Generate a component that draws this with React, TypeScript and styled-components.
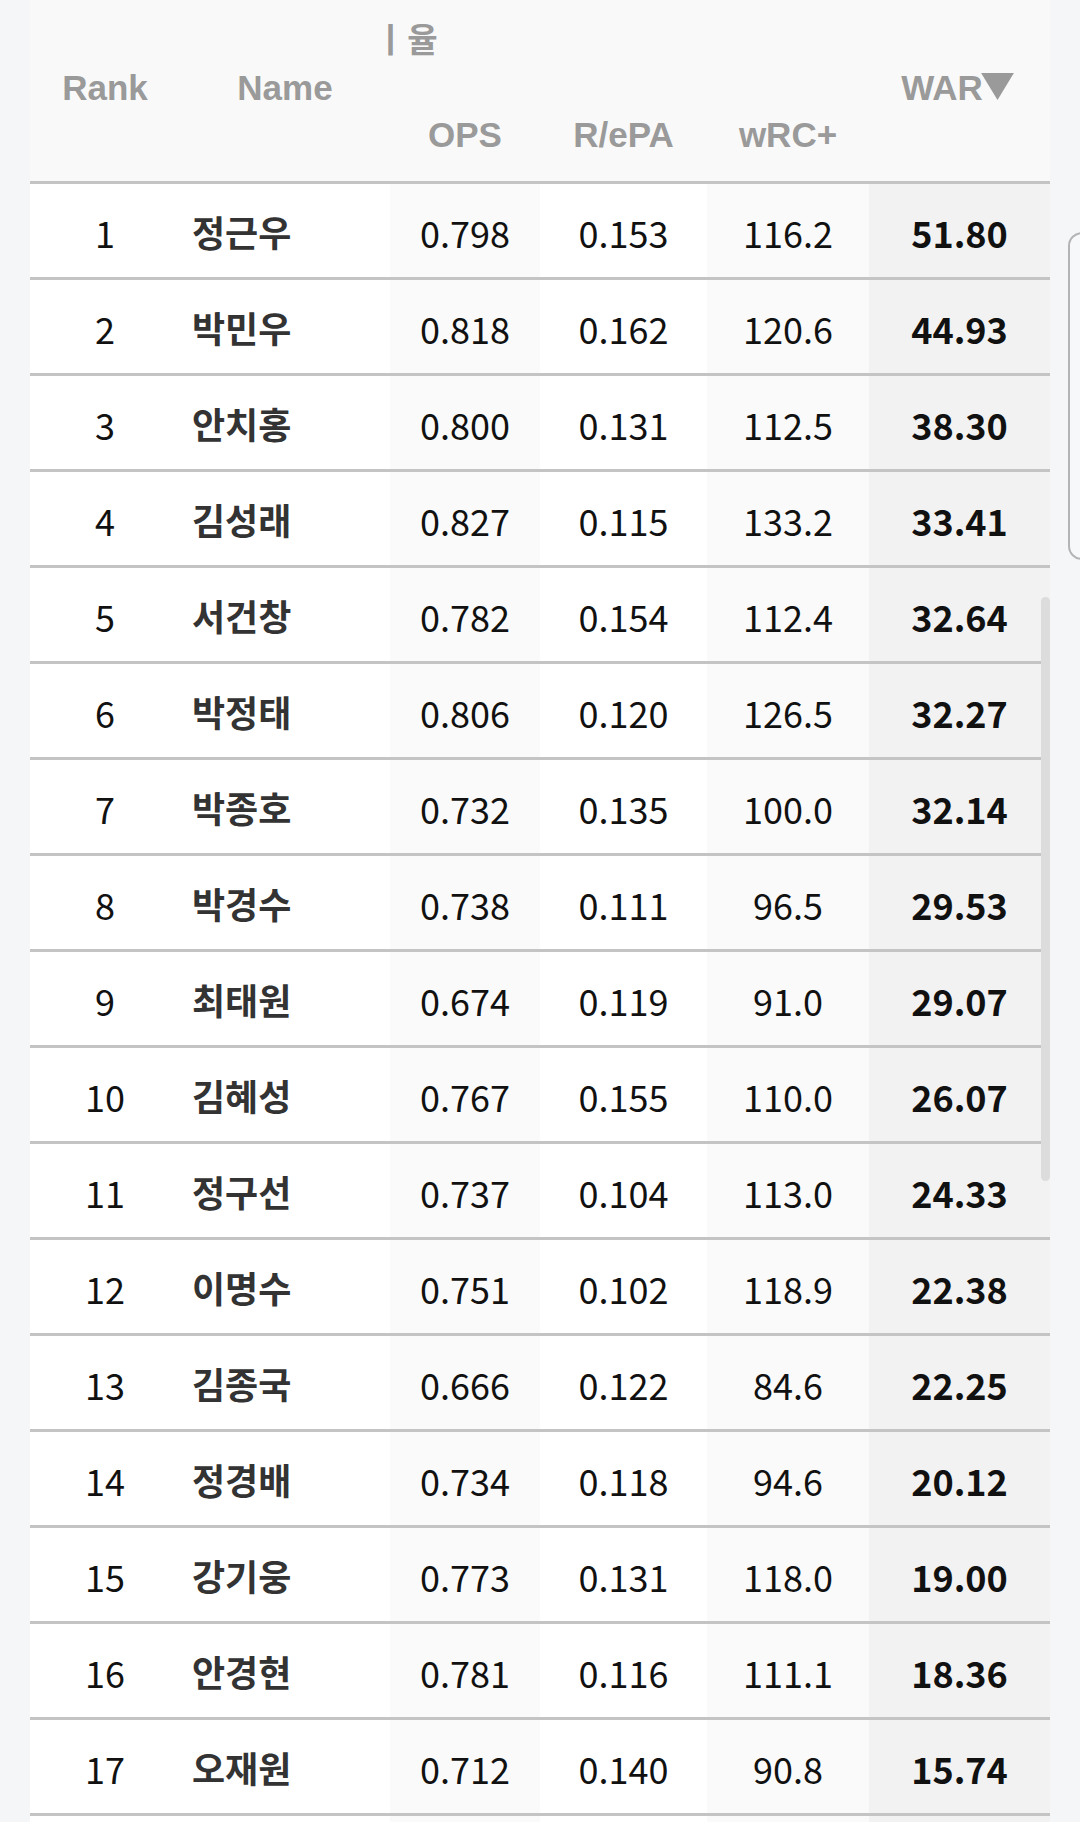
import React from "react";
import styled, { createGlobalStyle } from "styled-components";

const GlobalStyle = createGlobalStyle`
  html, body {
    margin: 0;
    padding: 0;
    background: #f5f6f8;
    overflow: hidden;
  }
  body {
    font-family: "Noto Sans CJK KR", "Noto Sans", sans-serif;
  }
`;

type Player = {
  rank: number;
  name: string;
  ops: string;
  repa: string;
  wrc: string;
  war: string;
};

const players: Player[] = [
  { rank: 1, name: "정근우", ops: "0.798", repa: "0.153", wrc: "116.2", war: "51.80" },
  { rank: 2, name: "박민우", ops: "0.818", repa: "0.162", wrc: "120.6", war: "44.93" },
  { rank: 3, name: "안치홍", ops: "0.800", repa: "0.131", wrc: "112.5", war: "38.30" },
  { rank: 4, name: "김성래", ops: "0.827", repa: "0.115", wrc: "133.2", war: "33.41" },
  { rank: 5, name: "서건창", ops: "0.782", repa: "0.154", wrc: "112.4", war: "32.64" },
  { rank: 6, name: "박정태", ops: "0.806", repa: "0.120", wrc: "126.5", war: "32.27" },
  { rank: 7, name: "박종호", ops: "0.732", repa: "0.135", wrc: "100.0", war: "32.14" },
  { rank: 8, name: "박경수", ops: "0.738", repa: "0.111", wrc: "96.5", war: "29.53" },
  { rank: 9, name: "최태원", ops: "0.674", repa: "0.119", wrc: "91.0", war: "29.07" },
  { rank: 10, name: "김혜성", ops: "0.767", repa: "0.155", wrc: "110.0", war: "26.07" },
  { rank: 11, name: "정구선", ops: "0.737", repa: "0.104", wrc: "113.0", war: "24.33" },
  { rank: 12, name: "이명수", ops: "0.751", repa: "0.102", wrc: "118.9", war: "22.38" },
  { rank: 13, name: "김종국", ops: "0.666", repa: "0.122", wrc: "84.6", war: "22.25" },
  { rank: 14, name: "정경배", ops: "0.734", repa: "0.118", wrc: "94.6", war: "20.12" },
  { rank: 15, name: "강기웅", ops: "0.773", repa: "0.131", wrc: "118.0", war: "19.00" },
  { rank: 16, name: "안경현", ops: "0.781", repa: "0.116", wrc: "111.1", war: "18.36" },
  { rank: 17, name: "오재원", ops: "0.712", repa: "0.140", wrc: "90.8", war: "15.74" },
];

const COLS = "150px 210px 150px 167px 162px 181px";

export default function App() {
  return (
    <>
      <GlobalStyle />
      <Page>
        <Gutter />
        <TableWrap>
          <Header>
            <HeadCell style={{ gridRow: "1 / 3", gridColumn: 1 }}>Rank</HeadCell>
            <HeadCell style={{ gridRow: "1 / 3", gridColumn: 2 }}>Name</HeadCell>
            <GroupCell>
              <GroupText>비율</GroupText>
            </GroupCell>
            <SubHead style={{ gridColumn: 3 }}>OPS</SubHead>
            <SubHead style={{ gridColumn: 4 }}>R/ePA</SubHead>
            <SubHead style={{ gridColumn: 5 }}>wRC+</SubHead>
            <HeadCell style={{ gridRow: "1 / 3", gridColumn: 6 }}>
              <SortLabel>
                WAR
                <SortArrow viewBox="0 0 34 28" aria-hidden>
                  <path d="M0 0 H34 L17 28 Z" fill="#9a9a9a" />
                </SortArrow>
              </SortLabel>
            </HeadCell>
          </Header>
          {players.map((p) => (
            <Row key={p.rank}>
              <RankCell>{p.rank}</RankCell>
              <NameCell>{p.name}</NameCell>
              <NumCell $shade="light">{p.ops}</NumCell>
              <NumCell>{p.repa}</NumCell>
              <NumCell $shade="light">{p.wrc}</NumCell>
              <NumCell $shade="dark" $bold>
                {p.war}
              </NumCell>
            </Row>
          ))}
          <Row>
            <RankCell />
            <NameCell />
            <NumCell $shade="light" />
            <NumCell />
            <NumCell $shade="light" />
            <NumCell $shade="dark" />
          </Row>
          <ScrollThumb />
        </TableWrap>
        <Gutter>
          <SideHandle />
        </Gutter>
      </Page>
    </>
  );
}

const Page = styled.div`
  display: flex;
  width: 1080px;
  min-height: 1822px;
  background: #f5f6f8;
`;

const Gutter = styled.div`
  position: relative;
  width: 30px;
  flex-shrink: 0;
`;

const TableWrap = styled.div`
  position: relative;
  width: 1020px;
  flex-shrink: 0;
  background: #fff;
`;

const Header = styled.div`
  display: grid;
  grid-template-columns: ${COLS};
  grid-template-rows: 80px 101px;
  background: #f9f9f9;
  border-bottom: 3px solid #c4c4c4;
  font-family: "Liberation Sans", Arial, "Noto Sans CJK KR", sans-serif;
  font-weight: 700;
  font-size: 35px;
  color: #9a9a9a;
`;

const HeadCell = styled.div`
  display: flex;
  align-items: center;
  justify-content: center;
  padding-bottom: 6px;
`;

const SubHead = styled.div`
  grid-row: 2;
  display: flex;
  align-items: center;
  justify-content: center;
  padding-top: 8px;
`;

const GroupCell = styled.div`
  grid-row: 1;
  grid-column: 3 / 6;
  display: flex;
  align-items: center;
  overflow: hidden;
  margin-left: -4px;
  padding-bottom: 4px;
`;

const GroupText = styled.span`
  margin-left: -20px;
  font-family: "Noto Sans CJK KR", sans-serif;
  font-weight: 700;
  font-size: 33px;
  letter-spacing: 11px;
  white-space: nowrap;
`;

const SortLabel = styled.span`
  display: inline-flex;
  align-items: center;
  margin-left: -4px;
`;

const SortArrow = styled.svg`
  width: 33px;
  height: 27px;
  margin-left: -2px;
  margin-top: -2px;
`;

const Row = styled.div`
  display: grid;
  grid-template-columns: ${COLS};
  height: 93px;
  border-bottom: 3px solid #c4c4c4;
  font-family: "Noto Sans CJK KR", sans-serif;
  font-size: 36px;
  color: #111;
`;

const RankCell = styled.div`
  display: flex;
  align-items: center;
  justify-content: center;
  padding-top: 2px;
`;

const NameCell = styled.div`
  display: flex;
  align-items: center;
  padding: 0 0 0 12px;
  font-weight: 700;
  color: #333;
`;

const NumCell = styled.div<{ $shade?: "light" | "dark"; $bold?: boolean }>`
  display: flex;
  align-items: center;
  justify-content: center;
  padding-top: 2px;
  background: ${({ $shade }) =>
    $shade === "light" ? "#fafafa" : $shade === "dark" ? "#f2f2f2" : "#fff"};
  font-weight: ${({ $bold }) => ($bold ? 700 : 400)};
`;

const ScrollThumb = styled.div`
  position: absolute;
  right: 0;
  top: 597px;
  width: 9px;
  height: 584px;
  border-radius: 5px;
  background: #dcdcdc;
`;

const SideHandle = styled.div`
  position: absolute;
  left: 18px;
  top: 232px;
  width: 40px;
  height: 324px;
  border: 2px solid #b4b4b4;
  border-radius: 14px;
  background: #f7f8fa;
`;
